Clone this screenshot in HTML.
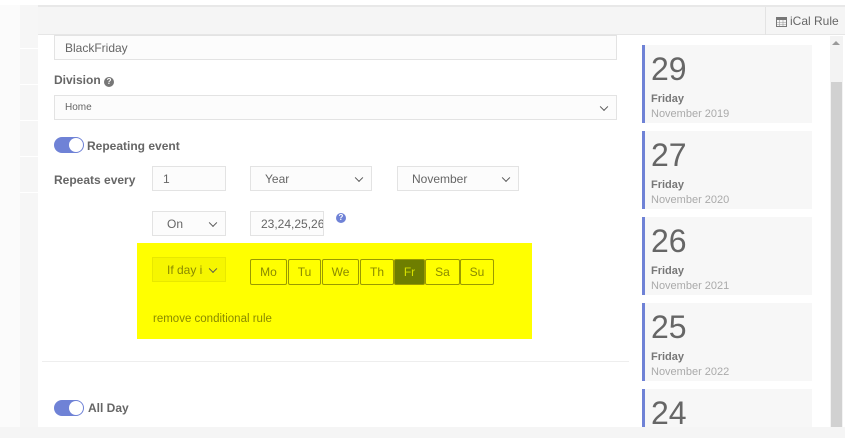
<!DOCTYPE html>
<html><head><style>
*{box-sizing:border-box;margin:0;padding:0}
body{width:845px;height:438px;overflow:hidden;background:#fbfbfb;font-family:"Liberation Sans",Arial,sans-serif;position:relative;color:#555}
.a{position:absolute}
.inp{position:absolute;border:1px solid #e3e3e3;background:#fcfcfc;font-size:12px;color:#666;padding-left:10px;display:flex;align-items:center}
.sel::after{content:"";position:absolute;right:9px;top:50%;width:5px;height:5px;border-right:1.5px solid #555;border-bottom:1.5px solid #555;transform:translateY(-70%) rotate(45deg)}
.lbl{position:absolute;font-size:12px;font-weight:bold;color:#666}
.tog{position:absolute;width:30px;height:16px;border-radius:8px;background:#6f82d6}
.tog::after{content:"";position:absolute;right:1px;top:1px;width:14px;height:14px;border-radius:50%;background:#fff}
.day{position:absolute;top:259px;height:26px;border:1px solid #9a9a00;border-radius:2px;font-size:12px;color:#8a8a00;display:flex;align-items:center;justify-content:center}
.card{position:absolute;left:642px;width:170px;height:78px;background:#f7f7f7;border-left:3px solid #6f82d6;padding-left:6px}
.card .n{font-size:32px;color:#666;line-height:32px;margin-top:8px}
.card .d{font-size:11px;font-weight:bold;color:#777;margin-top:8px}
.card .m{font-size:11px;color:#aaa;margin-top:3px}
.hl{border-radius:50%;background:#777;color:#fff;width:10px;height:10px;font-size:8px;display:inline-flex;align-items:center;justify-content:center;font-weight:bold}
</style></head><body>
<div class="a" style="left:0;top:0;width:845px;height:5px;background:#fff"></div>
<div class="a" style="left:20px;top:5px;width:18px;height:425px;background:#f6f6f6"></div>
<div class="a" style="left:20px;top:48px;width:18px;height:1px;background:#fff"></div>
<div class="a" style="left:20px;top:84px;width:18px;height:1px;background:#fff"></div>
<div class="a" style="left:20px;top:120px;width:18px;height:1px;background:#fff"></div>
<div class="a" style="left:20px;top:156px;width:18px;height:1px;background:#fff"></div>
<div class="a" style="left:20px;top:192px;width:18px;height:1px;background:#fff"></div>
<div class="a" style="left:38px;top:5px;width:807px;height:422px;background:#fff;border-top:2px solid #e8e8e8"></div>
<div class="a" style="left:38px;top:7px;width:807px;height:28px;background:#f5f5f5;border-bottom:1px solid #e6e6e6"></div>
<div class="a" style="left:765px;top:7px;width:78px;height:28px;border-left:1px solid #e3e3e3;font-size:12px;color:#666;display:flex;align-items:center;padding-left:10px"><svg width="11" height="11" viewBox="0 0 11 11" style="margin-right:3px"><rect x="0.5" y="1.5" width="10" height="9" fill="none" stroke="#777"/><rect x="0.5" y="1.5" width="10" height="2.5" fill="#777"/><path d="M3.5 4v6M7 4v6M1 6.5h9M1 8.5h9" stroke="#999" stroke-width=".6"/></svg>iCal Rule</div>

<div class="inp" style="left:54px;top:35px;width:563px;height:25px;font-size:12px">BlackFriday</div>
<div class="lbl" style="left:54px;top:73px">Division <span class="hl">?</span></div>
<div class="inp sel" style="left:54px;top:95px;width:563px;height:25px;font-size:10px">Home</div>
<div class="tog" style="left:54px;top:137px"></div>
<div class="lbl" style="left:87px;top:139px">Repeating event</div>
<div class="lbl" style="left:54px;top:173px">Repeats every</div>
<div class="inp" style="left:152px;top:166px;width:74px;height:25px">1</div>
<div class="inp sel" style="left:250px;top:166px;width:122px;height:25px;padding-left:14px">Year</div>
<div class="inp sel" style="left:397px;top:166px;width:122px;height:25px;padding-left:14px">November</div>
<div class="inp sel" style="left:152px;top:211px;width:74px;height:25px;padding-left:14px">On</div>
<div class="inp" style="left:250px;top:211px;width:74px;height:25px;overflow:hidden;white-space:nowrap">23,24,25,26</div>
<div class="a" style="left:336px;top:213px;width:10px;height:10px;border-radius:50%;background:#6f82d6;color:#fff;font-size:8px;font-weight:bold;text-align:center;line-height:10px">?</div>

<div class="a" style="left:137px;top:243px;width:395px;height:96px;background:#ffff00"></div>
<div class="inp sel" style="left:152px;top:257px;width:74px;height:25px;background:#f6f600;border-color:#e8e800;color:#8a8a00;padding-left:14px;overflow:hidden;white-space:nowrap"><span style="width:36px;overflow:hidden;display:inline-block">If day is</span></div>
<div class="day" style="left:250px;width:37px">Mo</div>
<div class="day" style="left:288px;width:33px">Tu</div>
<div class="day" style="left:322px;width:37px">We</div>
<div class="day" style="left:360px;width:34px">Th</div>
<div class="day" style="left:394px;width:31px;background:#6e7e00;color:#d6e000">Fr</div>
<div class="day" style="left:425px;width:35px">Sa</div>
<div class="day" style="left:460px;width:34px">Su</div>
<div class="a" style="left:153px;top:313px;font-size:11.5px;color:#8a8a00">remove conditional rule</div>
<div class="a" style="left:42px;top:361px;width:587px;height:1px;background:#eee"></div>
<div class="tog" style="left:54px;top:400px"></div>
<div class="lbl" style="left:88px;top:401px">All Day</div>

<div class="card" style="top:45px"><div class="n">29</div><div class="d">Friday</div><div class="m">November 2019</div></div>
<div class="card" style="top:131px"><div class="n">27</div><div class="d">Friday</div><div class="m">November 2020</div></div>
<div class="card" style="top:217px"><div class="n">26</div><div class="d">Friday</div><div class="m">November 2021</div></div>
<div class="card" style="top:303px"><div class="n">25</div><div class="d">Friday</div><div class="m">November 2022</div></div>
<div class="card" style="top:389px;height:38px"><div class="n">24</div></div>
<div class="a" style="left:830px;top:36px;width:13px;height:391px;background:#f3f3f3"></div>
<div class="a" style="left:832px;top:41px;width:0;height:0;border-left:4px solid transparent;border-right:4px solid transparent;border-bottom:4px solid #999"></div>
<div class="a" style="left:831px;top:82px;width:11px;height:345px;background:#d1d1d1"></div>
<div class="a" style="left:0;top:427px;width:845px;height:11px;background:#f5f5f5"></div>
</body></html>
